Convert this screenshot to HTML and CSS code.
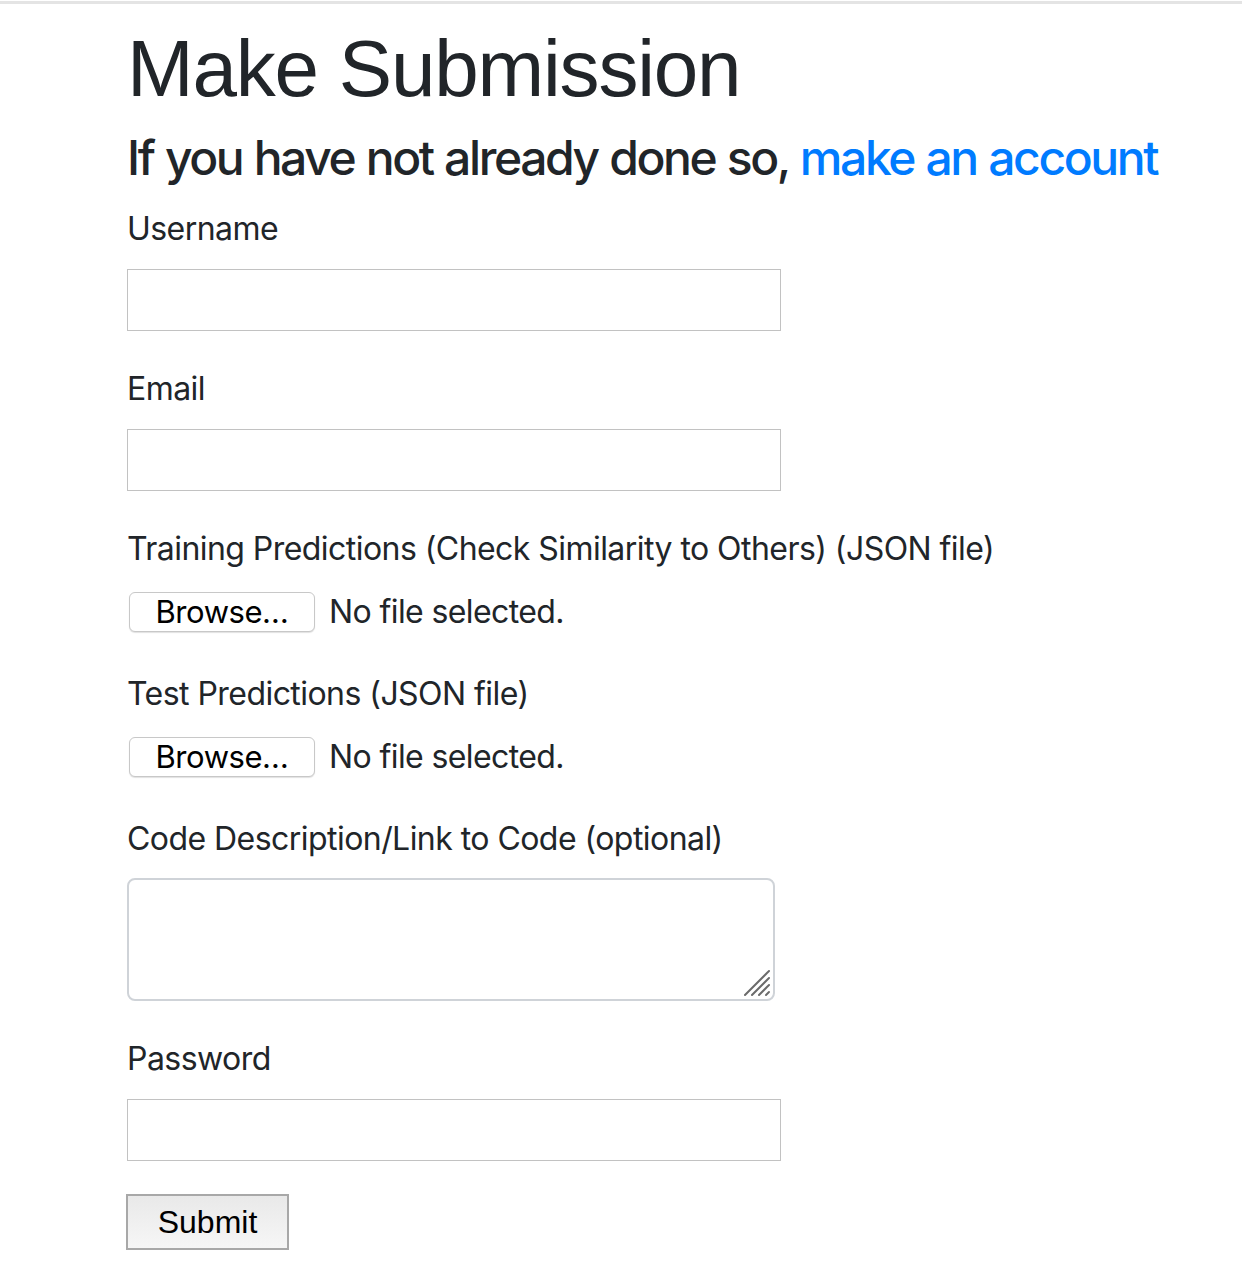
FILE: index.html
```html
<!DOCTYPE html>
<html lang="en">
<head>
<meta charset="utf-8">
<title>Make Submission</title>
<link rel="stylesheet" href="styles.css">
</head>
<body>
<div class="topbar"></div>
<main class="container">
  <h1 class="title">Make Submission</h1>
  <h4 class="subtitle">If you have not already done so, <a href="#" class="link">make an account</a></h4>
  <form class="form">
    <div class="group">
      <label class="label" for="username">Username</label>
      <input class="input" type="text" id="username">
    </div>
    <div class="group">
      <label class="label" for="email">Email</label>
      <input class="input" type="email" id="email">
    </div>
    <div class="group">
      <label class="label">Training Predictions (Check Similarity to Others) (JSON file)</label>
      <div class="file">
        <button type="button" class="browse">Browse…</button>
        <span class="file-text">No file selected.</span>
      </div>
    </div>
    <div class="group">
      <label class="label">Test Predictions (JSON file)</label>
      <div class="file">
        <button type="button" class="browse">Browse…</button>
        <span class="file-text">No file selected.</span>
      </div>
    </div>
    <div class="group">
      <label class="label" for="code">Code Description/Link to Code (optional)</label>
      <div class="ta-wrap">
        <textarea class="textarea" id="code"></textarea>
        <svg class="grip" width="30" height="30" viewBox="0 0 30 30">
          <g stroke="#6b6b6b" stroke-width="2" stroke-linecap="round">
            <line x1="3" y1="27" x2="27" y2="3"/>
            <line x1="10" y1="27" x2="27" y2="10"/>
            <line x1="17" y1="27" x2="27" y2="17"/>
            <line x1="24" y1="27" x2="27" y2="24"/>
          </g>
        </svg>
      </div>
    </div>
    <div class="group">
      <label class="label" for="password">Password</label>
      <input class="input" type="password" id="password">
    </div>
    <button type="submit" class="submit">Submit</button>
  </form>
</main>
</body>
</html>
```

FILE: styles.css
```css
html, body {
  margin: 0;
  padding: 0;
  background: #ffffff;
}
body {
  font-family: Inter, "Liberation Sans", Arial, sans-serif;
  color: #212529;
}
.topbar {
  height: 1px;
  border-bottom: 3px solid #e4e4e4;
}
.container {
  padding: 17px 0 0 127px;
}
.title {
  font-family: "Liberation Sans", Arial, sans-serif;
  font-size: 80px;
  font-weight: 400;
  line-height: 96px;
  margin: 0 0 12px;
  letter-spacing: -1.2px;
  color: #212529;
}
.subtitle {
  font-size: 48px;
  font-weight: 500;
  line-height: 58px;
  margin: 0 0 18px;
  letter-spacing: -2.4px;
  word-spacing: 1px;
}
.link {
  color: #007bff;
  text-decoration: none;
}
.group {
  margin-bottom: 34px;
}
.label {
  display: block;
  font-size: 32px;
  line-height: 48px;
  margin-bottom: 16px;
  letter-spacing: -0.55px;
}
.input {
  display: block;
  box-sizing: border-box;
  width: 654px;
  height: 62px;
  margin: 0;
  border: 1px solid #c2c2c2;
  border-radius: 0;
  background: #fff;
  padding: 0 8px;
  font-size: 28px;
}
.file {
  display: flex;
  align-items: flex-start;
  height: 47px;
  padding-top: 3px;
  box-sizing: border-box;
}
.browse {
  box-sizing: border-box;
  width: 186px;
  height: 40px;
  margin-left: 2px;
  padding: 0;
  border: 1px solid #c8c8c8;
  border-radius: 6px;
  background: #fff;
  box-shadow: 0 1px 1px rgba(0,0,0,0.12);
  font-family: Inter, "Liberation Sans", Arial, sans-serif;
  font-size: 31px;
  letter-spacing: -0.45px;
  color: #000;
  line-height: 38px;
}
.file-text {
  margin-left: 14px;
  font-size: 32px;
  line-height: 40px;
  letter-spacing: -0.6px;
  color: #212529;
}
.ta-wrap {
  position: relative;
  width: 648px;
  height: 123px;
  margin-top: -1px;
}
.textarea {
  display: block;
  box-sizing: border-box;
  width: 648px;
  height: 123px;
  margin: 0;
  border: 2px solid #cfd3d8;
  border-radius: 8px;
  resize: none;
  background: #fff;
  font-size: 28px;
  padding: 6px 10px;
}
.grip {
  position: absolute;
  right: 3px;
  bottom: 3px;
}
.submit {
  box-sizing: border-box;
  width: 163px;
  height: 56px;
  margin: -1px 0 0 -1px;
  padding: 0;
  border: 2px solid #a8a8a8;
  border-radius: 0;
  background: linear-gradient(#e9e9e9, #f6f6f6);
  font-family: "Liberation Sans", Arial, sans-serif;
  font-size: 32px;
  color: #000;
}
```
